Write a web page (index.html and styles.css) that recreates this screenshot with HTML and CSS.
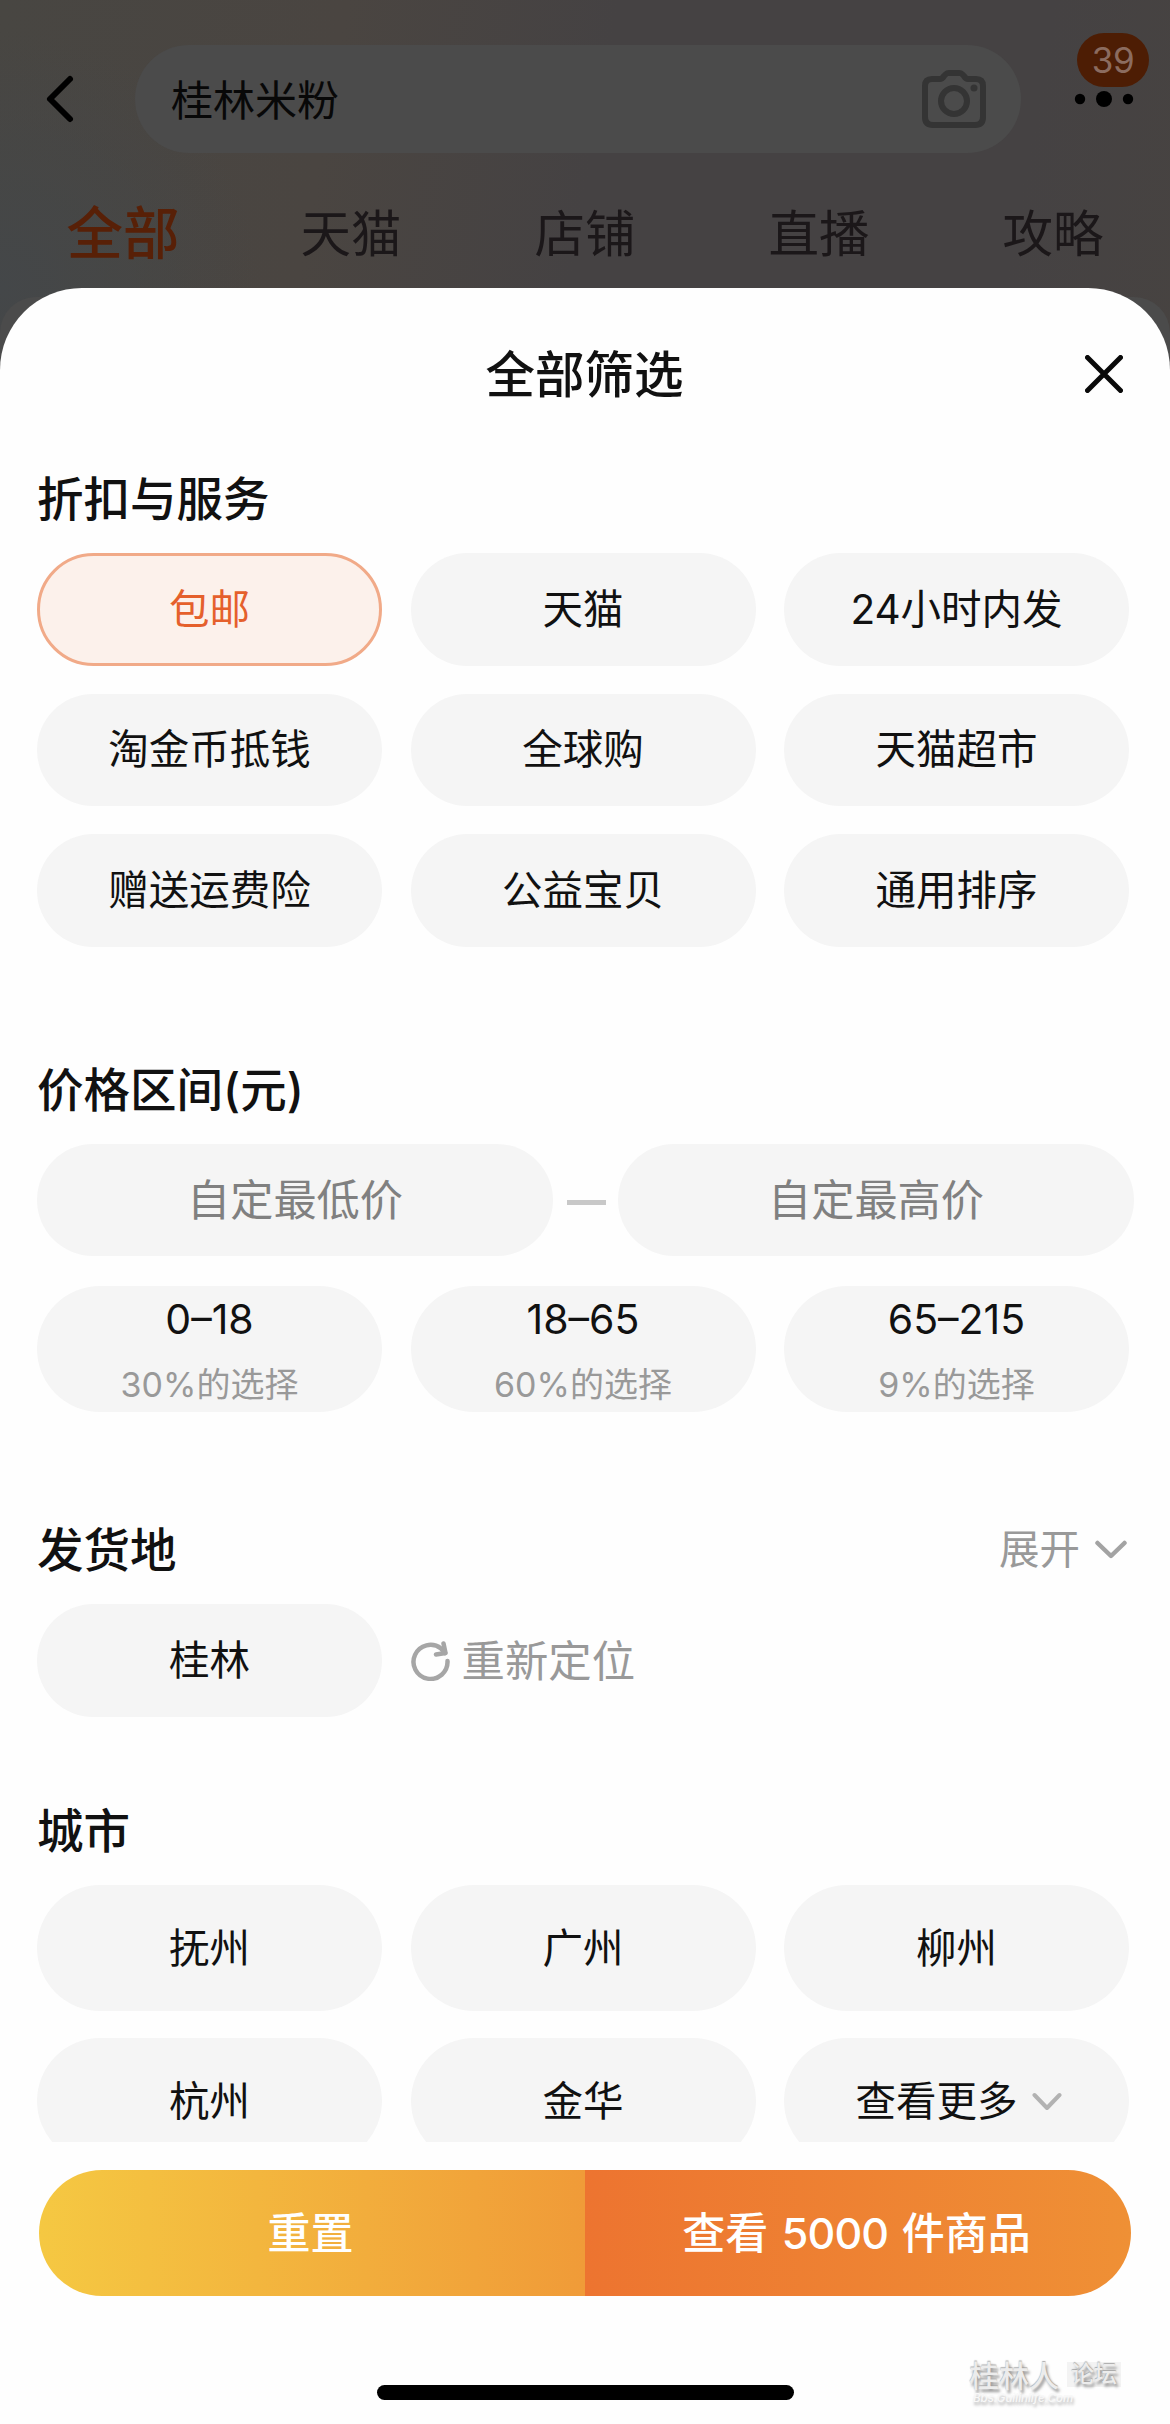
FILE: index.html
```html
<!DOCTYPE html>
<html lang="zh-CN">
  <head>
    <meta charset="utf-8">
    <meta name="viewport" content="width=device-width, initial-scale=1">
    <title>全部筛选</title>
    <link rel="stylesheet" href="styles.css">
  </head>
  <body>
    <!-- Search results page, dimmed under the filter sheet -->
    <header class="page-header">
      <div class="search-row">
        <svg class="back" width="30" height="50" viewBox="0 0 30 50" fill="none" stroke="#000" stroke-width="6" stroke-linecap="round" stroke-linejoin="round">
          <path d="M25 5L5 25L25 45"></path>
        </svg>
        <div class="search-box">
          <span>桂林米粉</span>
          <svg width="66" height="60" viewBox="0 0 66 60" fill="none" stroke="#343434" stroke-width="6" stroke-linejoin="round">
            <path d="M11 10H19Q21 10 23 7L25 5Q26 4 28 4H38Q40 4 41 5L43 7Q45 10 47 10H55Q62 10 62 17V48Q62 56 54 56H12Q4 56 4 48V17Q4 10 11 10Z"></path>
            <circle cx="33" cy="32" r="13"></circle>
            <circle cx="53" cy="19" r="3.5" fill="#343434" stroke="none"></circle>
          </svg>
        </div>
        <div class="more">
          <svg width="60" height="18" viewBox="0 0 60 18">
            <circle cx="6" cy="9" r="5.2"></circle>
            <circle cx="30" cy="9" r="8"></circle>
            <circle cx="54" cy="9" r="5.2"></circle>
          </svg>
          <span class="badge">39</span>
        </div>
      </div>
      <nav class="tabs">
        <span class="tab active">全部</span>
        <span class="tab">天猫</span>
        <span class="tab">店铺</span>
        <span class="tab">直播</span>
        <span class="tab">攻略</span>
      </nav>
      <div class="results"></div>
    </header>

    <main class="sheet">
      <div class="sheet-title">
        <h1>全部筛选</h1>
        <svg class="close" width="38" height="38" viewBox="0 0 38 38" fill="none" stroke="#0a0a0a" stroke-width="5" stroke-linecap="round">
          <path d="M2.5 2.5L35.5 35.5M35.5 2.5L2.5 35.5"></path>
        </svg>
      </div>

      <div class="filters">
        <section class="services">
          <h2>折扣与服务</h2>
          <div class="chips">
            <span class="chip selected">包邮</span>
            <span class="chip">天猫</span>
            <span class="chip">24小时内发</span>
            <span class="chip">淘金币抵钱</span>
            <span class="chip">全球购</span>
            <span class="chip">天猫超市</span>
            <span class="chip">赠送运费险</span>
            <span class="chip">公益宝贝</span>
            <span class="chip">通用排序</span>
          </div>
        </section>

        <section class="price">
          <h2>价格区间(元)</h2>
          <div class="range">
            <span class="range-input">自定最低价</span>
            <span class="dash"></span>
            <span class="range-input">自定最高价</span>
          </div>
          <div class="chips tall">
            <span class="chip price-chip"><b>0–18</b><small>30%的选择</small></span>
            <span class="chip price-chip"><b>18–65</b><small>60%的选择</small></span>
            <span class="chip price-chip"><b>65–215</b><small>9%的选择</small></span>
          </div>
        </section>

        <section class="origin">
          <div class="section-head">
            <h2>发货地</h2>
            <span class="expand">
              展开
              <svg width="32" height="20" viewBox="0 0 32 20" fill="none" stroke="#a3a3a3" stroke-width="4.5" stroke-linecap="round" stroke-linejoin="round">
                <path d="M2.5 3L16 16L29.5 3"></path>
              </svg>
            </span>
          </div>
          <div class="chips">
            <span class="chip">桂林</span>
            <span class="locate">
              <svg width="40" height="40" viewBox="0 0 40 40" fill="none" stroke="#a6a6a6" stroke-width="4.5" stroke-linecap="round" stroke-linejoin="round">
                <path d="M36.5 20A17 17 0 1 1 30 7.5L34 12"></path>
                <path d="M32.5 2.5L34.5 12L25 13.5"></path>
              </svg>
              重新定位
            </span>
          </div>
        </section>

        <section class="cities">
          <h2>城市</h2>
          <div class="chips tall">
            <span class="chip">抚州</span>
            <span class="chip">广州</span>
            <span class="chip">柳州</span>
            <span class="chip">杭州</span>
            <span class="chip">金华</span>
            <span class="chip view-more">
              查看更多
              <svg width="30" height="20" viewBox="0 0 30 20" fill="none" stroke="#b2b2b2" stroke-width="4" stroke-linecap="round" stroke-linejoin="round">
                <path d="M2.5 3L15 16L27.5 3"></path>
              </svg>
            </span>
          </div>
        </section>
      </div>

      <footer class="actions">
        <button class="reset">重置</button>
        <button class="submit">查看 <span>5000</span> 件商品</button>
      </footer>
      <div class="home-indicator"></div>
    </main>

    <div class="watermark">
      <div class="mark-name">桂林人<span>论坛</span></div>
      <div class="mark-url">Bbs.Guilinlife.Com</div>
    </div>
  </body>
</html>
```
FILE: styles.css
```css
* {
  box-sizing: border-box;
}

body {
  margin: 0;
  width: 1170px;
  height: 2424px;
  position: relative;
  overflow: hidden;
  background: #434343;
  font-family: Inter, "Noto Sans CJK SC", sans-serif;
  color: #111;
}

svg {
  display: block;
  flex: none;
}

h1, h2 {
  margin: 0;
  font-weight: 500;
}

/* Dimmed page */
.page-header {
  height: 400px;
  padding-top: 45px;
  background:
    radial-gradient(circle at 0 290px, #444749 0, rgba(68, 71, 73, 0) 260px),
    linear-gradient(100deg, #484642 0%, #4a4541 28%, #454243 50%, #454243 85%, #474341 100%);
}

.search-row {
  display: flex;
  align-items: center;
  height: 108px;
  padding-left: 45px;
}

.search-box {
  display: flex;
  align-items: center;
  justify-content: space-between;
  width: 886px;
  height: 108px;
  margin-left: 60px;
  padding: 0 34px 0 36px;
  border-radius: 54px;
  background: #4b4b4b;
  color: #080808;
  font-size: 42px;
  line-height: 60px;
}

.search-box span {
  padding-top: 4px;
}

.more {
  position: relative;
  margin-left: 53px;
}

.badge {
  position: absolute;
  left: 3px;
  top: -57px;
  width: 72px;
  height: 54px;
  border-radius: 27px;
  background: #4d1d04;
  color: #8b6c60;
  font-size: 35px;
  line-height: 54px;
  text-align: center;
  letter-spacing: -0.5px;
}

.tabs {
  display: grid;
  grid-template-columns: repeat(5, 1fr);
  height: 144px;
  padding-top: 9px;
}

.tab {
  font-size: 50.5px;
  line-height: 144px;
  text-align: center;
  color: #1b1719;
}

.tab.active {
  padding-left: 12px;
  font-size: 56.5px;
  font-weight: 500;
  color: #582007;
}

/* top edge of the result list, visible beside the sheet corners */
.results {
  height: 103px;
  border-radius: 36px 36px 0 0;
  background: #4b4b4b;
}

/* Filter sheet */
.sheet {
  position: absolute;
  left: 0;
  right: 0;
  top: 288px;
  bottom: 0;
  display: flex;
  flex-direction: column;
  border-radius: 82px 82px 0 0;
  background: #fefefe;
}

.sheet-title {
  display: grid;
  grid-template-columns: 1fr auto 1fr;
  align-items: center;
  height: 172px;
  padding: 0 47px 0 46px;
}

.sheet-title h1 {
  grid-column: 2;
  padding-top: 2px;
  font-size: 49.5px;
  line-height: 60px;
}

.close {
  justify-self: end;
}

.filters {
  height: 1681.5px;
  padding: 9px 0 0 37px;
  overflow: hidden;
}

h2 {
  margin-bottom: 24px;
  font-size: 46.5px;
  line-height: 60px;
}

.chips {
  display: grid;
  grid-template-columns: repeat(3, 345px);
  grid-auto-rows: 112.5px;
  gap: 28px 28.5px;
}

.chips.tall {
  grid-auto-rows: 126px;
  row-gap: 27px;
}

.chip {
  display: flex;
  align-items: center;
  justify-content: center;
  padding-top: 1px;
  border-radius: 63px;
  background: #f5f5f5;
  font-size: 40.5px;
  line-height: 50px;
}

.chip.selected {
  border: 3px solid #f1aa88;
  background: #fcf1eb;
  color: #e5602c;
}

.price {
  margin-top: 113.5px;
}

.range {
  display: flex;
  align-items: center;
  margin-bottom: 30px;
}

.range-input {
  width: 516px;
  height: 112px;
  border-radius: 56px;
  background: #f5f5f5;
  color: #808080;
  font-size: 43.2px;
  line-height: 113px;
  text-align: center;
}

.dash {
  width: 39px;
  height: 5px;
  margin: 5px 12px 0 14px;
  background: #c8c8c8;
}

.price-chip {
  flex-direction: column;
  justify-content: flex-start;
  padding: 8px 0 0;
}

.price-chip b {
  font-weight: 400;
  font-size: 41px;
}

.price-chip small {
  margin-top: 18px;
  color: #999;
  font-size: 34px;
  line-height: 46px;
}

.origin {
  margin-top: 108px;
}

.section-head {
  display: flex;
  justify-content: space-between;
  padding-right: 43px;
}

.expand {
  display: flex;
  align-items: center;
  gap: 15px;
  height: 60px;
  color: #999;
  font-size: 40.5px;
  line-height: 56px;
}

.locate {
  display: flex;
  align-items: center;
  gap: 11px;
  padding-top: 1px;
  color: #999;
  font-size: 43.4px;
  line-height: 50px;
}

.cities {
  margin-top: 84.5px;
}

.view-more {
  gap: 14px;
  padding-left: 4px;
}

/* Bottom buttons */
.actions {
  display: flex;
  height: 126px;
  margin: 28.5px 39px 0;
  border-radius: 63px;
  overflow: hidden;
}

.actions button {
  flex: 1;
  border: none;
  padding: 0 3px 1px 0;
  color: #fff;
  font-family: inherit;
  font-size: 43px;
  font-weight: 500;
  line-height: 60px;
}

.actions .reset {
  background: linear-gradient(90deg, #f5c842, #f09b38);
}

.actions .submit {
  background: linear-gradient(90deg, #ed7430, #ef9035);
}

.submit span {
  margin: 0 2px;
  letter-spacing: -0.8px;
}

.home-indicator {
  width: 417px;
  height: 15px;
  margin: 89px auto 0;
  border-radius: 8px;
  background: #000;
}

/* Forum watermark */
.watermark {
  position: absolute;
  left: 969px;
  top: 2360px;
  width: 160px;
  color: #ececec;
}

.mark-name {
  display: flex;
  align-items: center;
  justify-content: space-between;
  width: 152px;
  height: 28px;
  font-size: 30px;
  font-weight: 500;
  text-shadow: 2px 3px 3px #999, 0 -1px 1px #aaa;
}

.mark-name span {
  padding: 0 4px;
  background: #f3f3f3;
  font-size: 23px;
  line-height: 25px;
}

.mark-url {
  margin-top: 3px;
  padding-left: 4px;
  color: #f8f8f8;
  font-size: 11.5px;
  font-style: italic;
  font-weight: 500;
  line-height: 15px;
  text-shadow: 1px 3px 3px #aaa;
}
```
